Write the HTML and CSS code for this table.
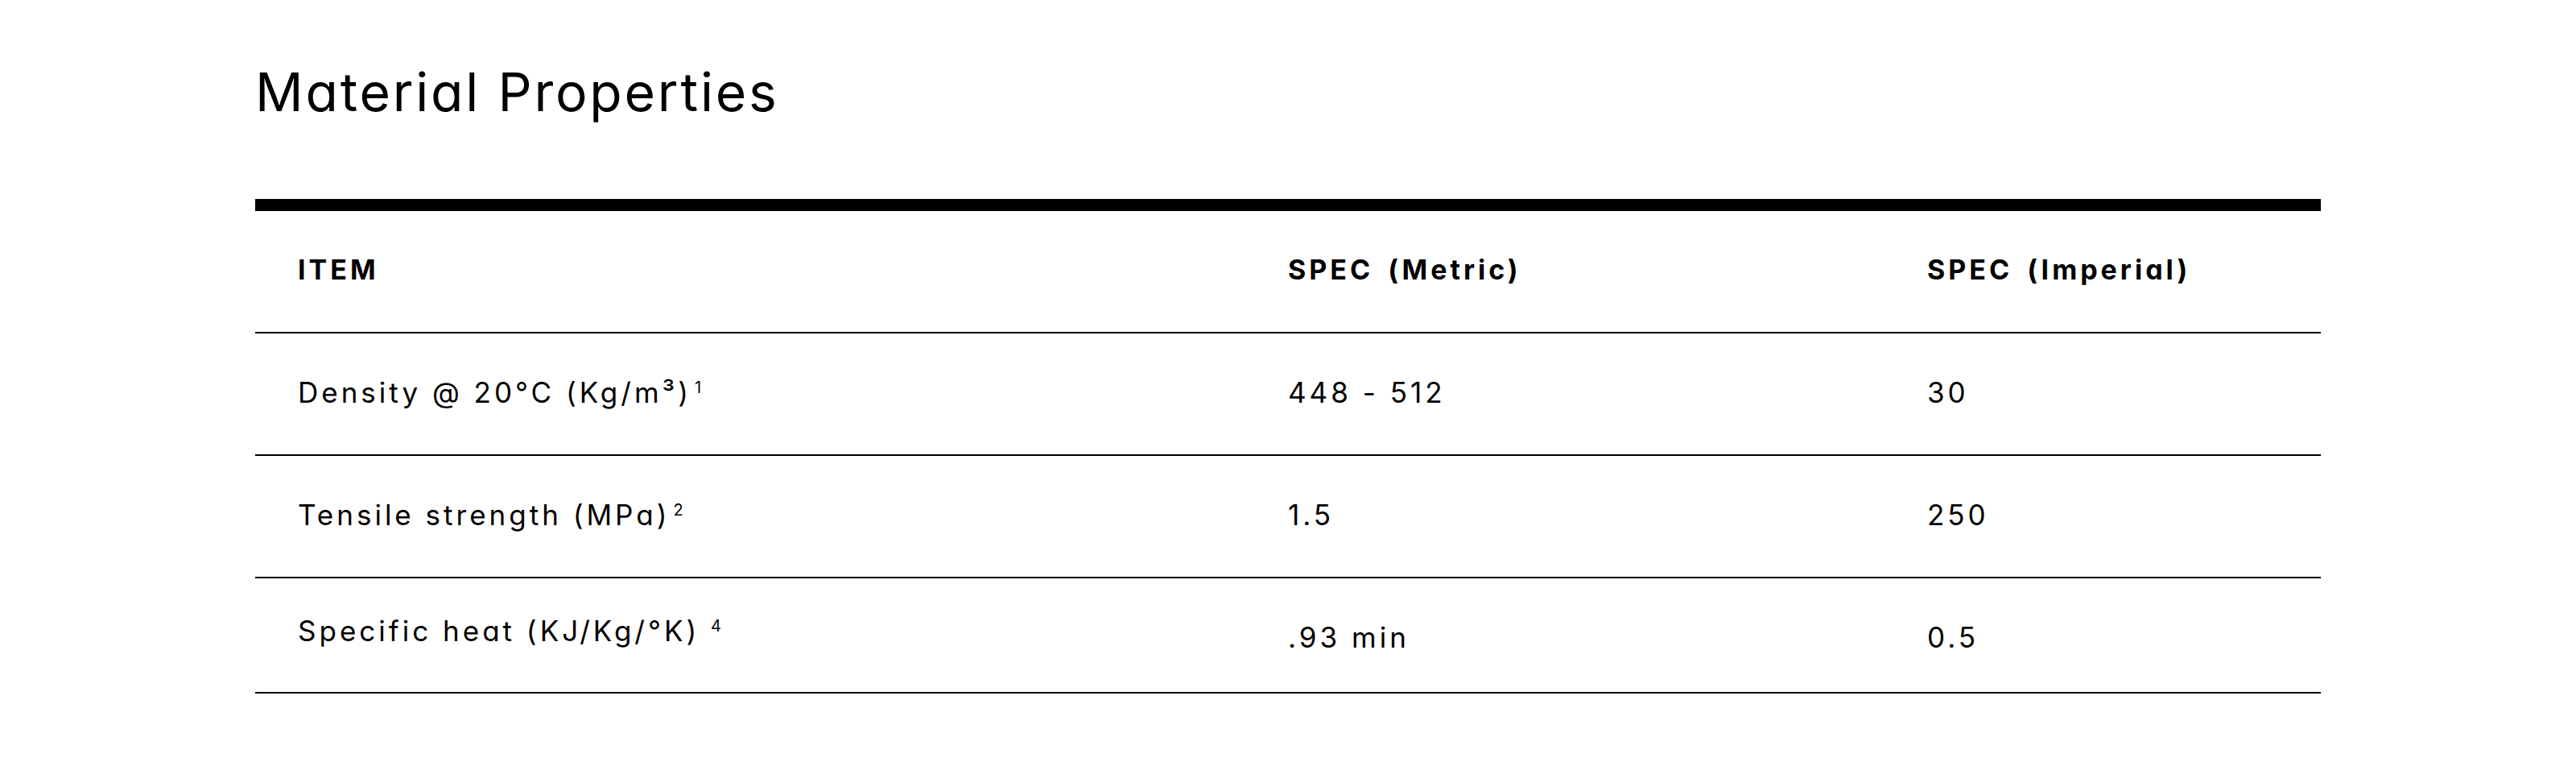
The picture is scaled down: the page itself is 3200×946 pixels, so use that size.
FILE: index.html
```html
<!DOCTYPE html>
<html lang="en">
<head>
<meta charset="utf-8">
<title>Material Properties</title>
<link rel="stylesheet" href="styles.css">
</head>
<body>
<main class="page">
  <h2 class="title">Material Properties</h2>
  <table class="spec-table">
    <colgroup>
      <col class="col-item">
      <col class="col-metric">
      <col class="col-imperial">
    </colgroup>
    <thead>
      <tr>
        <th>ITEM</th>
        <th>SPEC (Metric)</th>
        <th>SPEC (Imperial)</th>
      </tr>
    </thead>
    <tbody>
      <tr>
        <td>Density @ 20°C (Kg/m³)<sup class="note">1</sup></td>
        <td>448 - 512</td>
        <td>30</td>
      </tr>
      <tr>
        <td>Tensile strength (MPa)<sup class="note">2</sup></td>
        <td>1.5</td>
        <td>250</td>
      </tr>
      <tr class="row-short">
        <td class="cell-raised">Specific heat (KJ/Kg/°K) <sup class="note note-spaced">4</sup></td>
        <td>.93 min</td>
        <td>0.5</td>
      </tr>
    </tbody>
  </table>
</main>
</body>
</html>
```

FILE: styles.css
```css
* { box-sizing: border-box; }

html, body {
  margin: 0;
  padding: 0;
  background: #ffffff;
}

body {
  font-family: Inter, "Noto Sans", "Liberation Sans", sans-serif;
  font-feature-settings: "cv11" 1;
  color: #000000;
}

.page {
  width: 2566px;
  margin: 0 auto;
  padding-top: 75px;
}

.title {
  margin: 0 0 94px 0;
  font-size: 66px;
  line-height: 78px;
  font-weight: 400;
  letter-spacing: 2.8px;
}

.spec-table {
  width: 100%;
  table-layout: fixed;
  border-collapse: separate;
  border-spacing: 0;
}

.col-item { width: 1230px; }
.col-metric { width: 794px; }
.col-imperial { width: 542px; }

.spec-table th,
.spec-table td {
  text-align: left;
  vertical-align: top;
  padding: 53px 53px 57px 53px;
  line-height: 40px;
  white-space: nowrap;
}

.spec-table th {
  border-top: 15px solid #000;
  font-size: 34px;
  font-weight: 700;
  letter-spacing: 4px;
  word-spacing: 6px;
}

.spec-table td {
  border-top: 2px solid #000;
  font-size: 35px;
  font-weight: 400;
  letter-spacing: 4px;
}

.spec-table tbody tr:last-child td {
  border-bottom: 2px solid #000;
}

.row-short td {
  padding-bottom: 48px;
}

.row-short td.cell-raised {
  padding-top: 45px;
  padding-bottom: 56px;
}

.note {
  font-size: 20px;
  line-height: 0;
  letter-spacing: 0;
  vertical-align: 12px;
  margin-left: 4px;
}

.note-spaced {
  margin-left: 0;
}
```
